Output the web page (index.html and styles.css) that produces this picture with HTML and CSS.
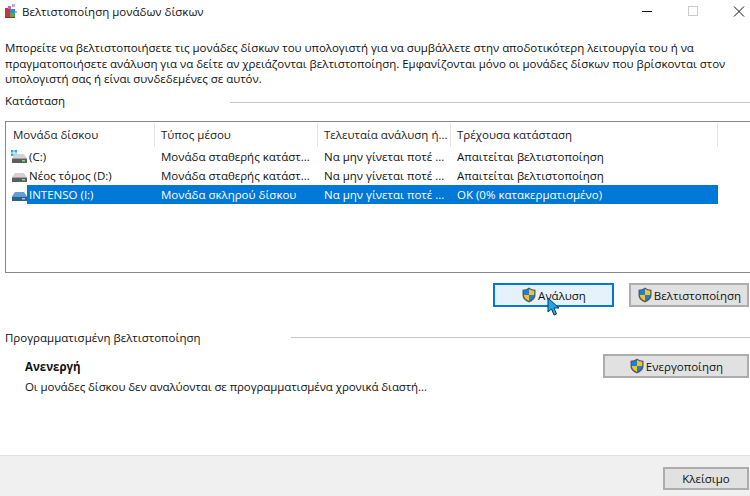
FILE: index.html
```html
<!DOCTYPE html>
<html lang="el">
<head>
<meta charset="utf-8">
<title>Βελτιστοποίηση μονάδων δίσκων</title>
<link rel="stylesheet" href="styles.css">
</head>
<body>
<svg class="defs" width="0" height="0" aria-hidden="true">
  <defs>
    <symbol id="shield" viewBox="0 0 16 16">
      <path d="M8 .5C6 2 4 2.6 1.5 2.8V8c0 3.4 2.6 5.9 6.5 7.5 3.900-1.600 6.500-4.100 6.500-7.500V2.800C12 2.600 10 2 8 .5z" fill="#4c5a6b"/>
      <path d="M8 2C6.300 3 4.600 3.600 2.800 3.800V8H8z" fill="#1f7fd0"/>
      <path d="M8 2v6h5.200V3.800C11.400 3.600 9.700 3 8 2z" fill="#f7c324"/>
      <path d="M2.800 8c.2 2.700 2.300 4.600 5.200 6V8z" fill="#f7c324"/>
      <path d="M8 8v6c2.900-1.400 5-3.300 5.200-6z" fill="#1f7fd0"/>
    </symbol>
    <symbol id="drive" viewBox="0 0 15 9">
      <path d="M3 0h9l3 4.500H0z" fill="#d2d2d2"/>
      <rect x="0" y="4.500" width="15" height="4.500" fill="#5d5d5d"/>
      <rect x="10" y="6" width="3" height="1.500" fill="#7fe07f"/>
    </symbol>
    <symbol id="drive-blue" viewBox="0 0 15 9">
      <path d="M3 0h9l3 4.500H0z" fill="#5f9fd4"/>
      <rect x="0" y="4.500" width="15" height="4.500" fill="#2f5f8f"/>
      <rect x="10" y="6" width="3" height="1.500" fill="#8fd0f0"/>
    </symbol>
  </defs>
</svg>

<div class="window">
  <header class="titlebar">
    <svg class="appicon" width="16" height="16" viewBox="0 0 16 16">
      <rect x="2" y="5" width="5" height="9" fill="#c23b3b"/>
      <rect x="7" y="6" width="5" height="4" fill="#2f8fc9"/>
      <rect x="7" y="10" width="5" height="4" fill="#5aa84a"/>
      <rect x="5" y="3" width="3" height="3" fill="#d65ab5"/>
      <rect x="9" y="1" width="3" height="3" fill="#c9a0dc"/>
      <rect x="12" y="8" width="2" height="2" fill="#9db8d8"/>
      <rect x="2" y="14" width="10" height="1" fill="#8a3030"/>
    </svg>
    <span class="title">Βελτιστοποίηση μονάδων δίσκων</span>
    <div class="controls">
      <svg class="ctl" width="46" height="22" viewBox="-12 0 46 22"><path d="M18 11.500h10" stroke="#111" fill="none"/></svg>
      <svg class="ctl" width="46" height="22" viewBox="-12 0 46 22"><rect x="18.500" y="6.500" width="9" height="9" stroke="#ccc" fill="none"/></svg>
      <svg class="ctl" width="46" height="22" viewBox="-12 0 46 22"><path d="M18 6.500l10 10M28 6.500l-10 10" stroke="#111" fill="none"/></svg>
    </div>
  </header>

  <main class="content">
    <p class="intro">Μπορείτε να βελτιστοποιήσετε τις μονάδες δίσκων του υπολογιστή για να συμβάλλετε στην αποδοτικότερη λειτουργία του ή να πραγματοποιήσετε ανάλυση για να δείτε αν χρειάζονται βελτιστοποίηση. Εμφανίζονται μόνο οι μονάδες δίσκων που βρίσκονται στον υπολογιστή σας ή είναι συνδεδεμένες σε αυτόν.</p>

    <div class="group-head group-status">
      <span class="group-label">Κατάσταση</span>
      <span class="rule"></span>
    </div>

    <section class="list">
      <div class="row head">
        <div class="cell">Μονάδα δίσκου</div>
        <div class="cell">Τύπος μέσου</div>
        <div class="cell">Τελευταία ανάλυση ή...</div>
        <div class="cell">Τρέχουσα κατάσταση</div>
        <div class="cell"></div>
      </div>
      <div class="row item">
        <div class="name">
          <span class="drive-wrap">
            <svg class="winflag" width="6" height="6" viewBox="0 0 6 6"><path d="M0 0h2.500v2.500H0zM3.500 0H6v2.500H3.500zM0 3.500h2.500V6H0zM3.500 3.500H6V6H3.500z" fill="#22a7f0"/></svg>
            <svg class="drive" width="15" height="9"><use href="#drive"/></svg>
          </span>
          <span>(C:)</span>
        </div>
        <div class="val">Μονάδα σταθερής κατάστ...</div>
        <div class="val">Να μην γίνεται ποτέ ...</div>
        <div class="val">Απαιτείται βελτιστοποίηση</div>
      </div>
      <div class="row item">
        <div class="name">
          <span class="drive-wrap"><svg class="drive" width="15" height="9"><use href="#drive"/></svg></span>
          <span>Νέος τόμος (D:)</span>
        </div>
        <div class="val">Μονάδα σταθερής κατάστ...</div>
        <div class="val">Να μην γίνεται ποτέ ...</div>
        <div class="val">Απαιτείται βελτιστοποίηση</div>
      </div>
      <div class="row item selected">
        <div class="name">
          <span class="drive-wrap"><svg class="drive" width="15" height="9"><use href="#drive-blue"/></svg></span>
          <span class="sel-text">INTENSO (I:)</span>
        </div>
        <div class="val">Μονάδα σκληρού δίσκου</div>
        <div class="val">Να μην γίνεται ποτέ ...</div>
        <div class="val">OK (0% κατακερματισμένο)</div>
      </div>
    </section>

    <div class="actions">
      <button class="btn btn-focus btn-analyze" type="button"><svg class="shield" width="16" height="16"><use href="#shield"/></svg>Ανάλυση</button>
      <button class="btn btn-opt" type="button"><svg class="shield" width="16" height="16"><use href="#shield"/></svg>Βελτιστοποίηση</button>
      <svg class="cursor" width="13" height="20" viewBox="0 0 13 20">
        <path d="M1 1v14l3.500-3 2.500 6 2.500-1-2.500-6H12z" fill="#1fa5e8" stroke="#0b3a5a" stroke-width="1"/>
      </svg>
    </div>

    <div class="group-head group-sched">
      <span class="group-label">Προγραμματισμένη βελτιστοποίηση</span>
      <span class="rule"></span>
    </div>

    <section class="sched">
      <div class="sched-text">
        <div class="sched-title">Ανενεργή</div>
        <div class="sched-desc">Οι μονάδες δίσκου δεν αναλύονται σε προγραμματισμένα χρονικά διαστή...</div>
      </div>
      <button class="btn btn-enable" type="button"><svg class="shield" width="16" height="16"><use href="#shield"/></svg>Ενεργοποίηση</button>
    </section>
  </main>

  <footer class="footer">
    <button class="btn btn-close" type="button">Κλείσιμο</button>
  </footer>
</div>
</body>
</html>
```
FILE: styles.css
```css
* { box-sizing: border-box; }
html, body { margin: 0; padding: 0; }
body {
  width: 750px;
  height: 496px;
  overflow: hidden;
  background: #fff;
  color: #111;
  font-family: "Open Sans", "Noto Sans", sans-serif;
  font-size: 11.5px;
}
.defs { position: absolute; }
.window { display: flex; flex-direction: column; height: 496px; }

.titlebar { display: flex; align-items: center; height: 22px; flex: none; padding-left: 3px; }
.appicon { flex: none; }
.title { margin-left: 3px; }
.controls { margin-left: auto; display: flex; }
.ctl { display: block; }

.content { flex: 1; display: flex; flex-direction: column; min-height: 0; }
.intro { margin: 18px 0 0; padding: 0 5px; height: 47px; line-height: 15.500px; width: 745px; letter-spacing: -0.03px; }

.group-head { display: flex; align-items: center; }
.group-label { padding-left: 5px; }
.rule { flex: 1; height: 1px; background: #c8c8c8; }
.group-status { margin-top: 5px; height: 20px; }
.group-status .group-label { margin-bottom: 3px; }
.group-status .rule { margin-left: 165px; }
.group-sched { margin-top: 21px; height: 18px; }
.group-sched .rule { margin-left: 90px; }

.list {
  margin: 9px 0 0 5px;
  height: 152px;
  border: 1px solid #828790;
  border-right: 0;
  flex: none;
}
.row { display: grid; grid-template-columns: 149px 163px 133px 267px 1fr; }
.head { height: 25px; align-items: stretch; }
.cell { display: flex; align-items: center; padding: 0 0 2px 6px; margin-top: 1px; border-right: 1px solid #e5e5e5; color: #222; }
.cell:first-child { padding-left: 7px; }
.cell:last-child { border-right: 0; }
.item { height: 19px; align-items: center; }
.name { display: flex; align-items: center; padding-left: 5px; height: 19px; }
.val { padding-left: 6px; height: 19px; line-height: 19px; white-space: nowrap; }
.drive-wrap { position: relative; display: block; width: 18px; height: 19px; flex: none; }
.drive { position: absolute; left: 1px; top: 7px; }
.winflag { position: absolute; left: 0; top: 3px; }
.selected { color: #fff; grid-template-columns: 149px 163px 133px 267px; }
.selected .val, .selected .sel-text { background: #0078d7; }
.selected .sel-text { flex: 1; height: 19px; line-height: 19px; margin-left: -2px; padding-left: 2px; }

.actions { display: flex; gap: 15px; margin: 10px 0 0 493px; position: relative; flex: none; }
.btn {
  display: flex; align-items: center; justify-content: center;
  font: inherit; color: #111; background: #e1e1e1; border: 2px solid #adadad; padding: 0; height: 24px;
}
.btn-focus { background: #e5f1fb; border-color: #0078d7; }
.btn-analyze { width: 121px; }
.btn-opt { width: 120px; }
.shield { flex: none; margin-right: 1px; }
.cursor { position: absolute; left: 54px; top: 14px; }

.sched { display: flex; align-items: flex-start; padding-left: 25px; margin-top: 8px; }
.sched-text { flex: 1; padding-top: 5px; }
.sched-title { font-weight: 700; line-height: 16px; }
.sched-desc { line-height: 16px; margin-top: 4px; letter-spacing: -0.09px; }
.btn-enable { width: 146px; margin-right: 1px; }

.footer {
  flex: none; height: 41px; background: #f0f0f0; border-top: 1px solid #e0e0e0;
  display: flex; justify-content: flex-end; padding: 11px 1px 0 0;
}
.btn-close { width: 86px; height: 23px; }
```
